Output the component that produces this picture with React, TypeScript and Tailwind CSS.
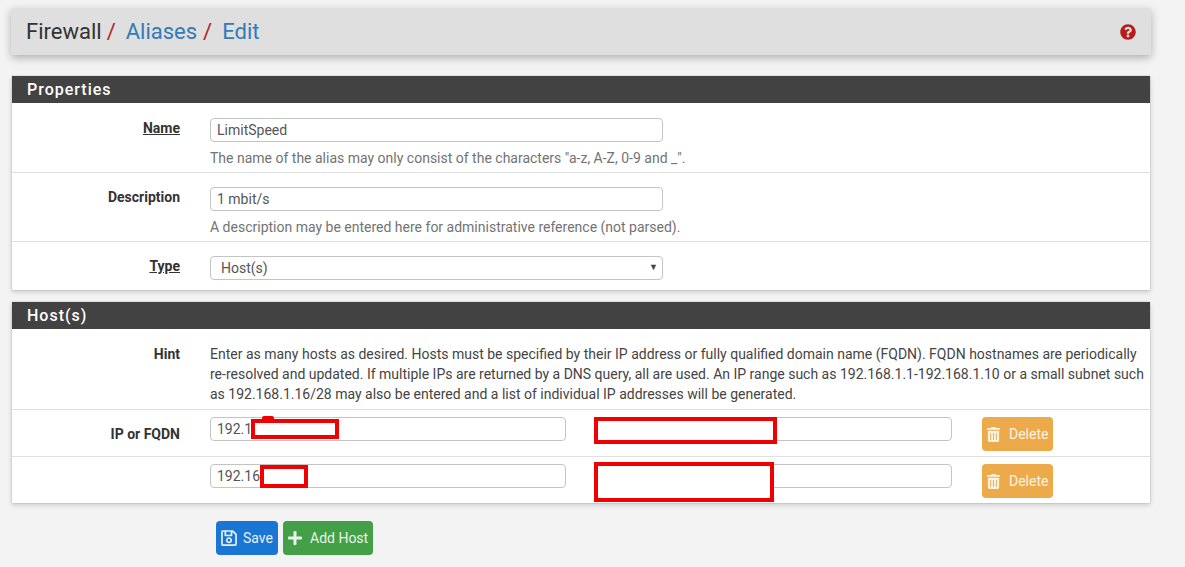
import { FaPlus, FaQuestionCircle, FaRegSave, FaTrashAlt } from 'react-icons/fa';

function PanelHead({ title }: { title: string }) {
  return (
    <div className="h-[27px] bg-[#424242] pl-[15px] text-[16px] leading-[28px] font-medium tracking-[1px] text-white">
      {title}
    </div>
  );
}

function Row({ label, underline, children, className }: { label?: string; underline?: boolean; children: React.ReactNode; className: string }) {
  return (
    <div className={`flex border-b border-[#e0e0e0] last:border-b-0 ${className}`}>
      <div className={`w-[168px] shrink-0 text-right text-[14px] leading-5 font-bold text-[#333] ${underline ? 'underline' : ''}`}>
        {label}
      </div>
      <div className="ml-[30px] min-w-0 flex-1">{children}</div>
    </div>
  );
}

function TextBox({ value, className }: { value?: string; className: string }) {
  return (
    <div className={`h-6 rounded-[4px] border border-[#c4c4c4] bg-white pl-[6px] text-[14px] leading-[22px] text-[#555] ${className}`}>
      {value}
    </div>
  );
}

function DeleteButton() {
  return (
    <div className="ml-[30px] flex h-[34px] w-[71px] items-center rounded-[4px] bg-[#edaa4a] pl-[4px] text-[14px] text-[#fdf3e3]">
      <FaTrashAlt className="h-[15px] w-[15px]" />
      <span className="ml-[8px]">Delete</span>
    </div>
  );
}

function Redact({ className }: { className: string }) {
  return <div className={`absolute border-4 border-[#f00000] bg-white ${className}`} />;
}

export default function App() {
  return (
    <div className="h-[567px] overflow-hidden bg-[#f3f3f3] pt-2 font-['Roboto',sans-serif]">
      <div className="mx-[11px] flex h-[47px] w-[1140px] items-center justify-between rounded-[2px] bg-[#dfdfdf] pr-[15px] pl-[15px] shadow-[0_3px_8px_rgba(0,0,0,0.28)]">
        <div className="text-[22px] leading-none text-[#333]">
          Firewall
          <span className="ml-[5px] text-[#b71c1c]">/</span>
          <span className="ml-[10px] text-[#337ab7]">Aliases</span>
          <span className="ml-[6px] text-[#b71c1c]">/</span>
          <span className="ml-[10px] text-[#337ab7]">Edit</span>
        </div>
        <FaQuestionCircle className="h-[16px] w-[16px] text-[#b71c1c]" />
      </div>

      <div className="mx-3 mt-[21px] w-[1138px] bg-white shadow-[0_2px_5px_rgba(0,0,0,0.18),0_0_1px_rgba(0,0,0,0.3)]">
        <PanelHead title="Properties" />
        <Row label="Name" underline className="h-[70px] pt-[15px]">
          <TextBox value="LimitSpeed" className="w-[453px]" />
          <p className="mt-[6px] text-[14px] leading-5 text-[#737373]">The name of the alias may only consist of the characters "a-z, A-Z, 0-9 and _".</p>
        </Row>
        <Row label="Description" className="h-[69px] pt-[14px]">
          <TextBox value="1 mbit/s" className="w-[453px]" />
          <p className="mt-[6px] text-[14px] leading-5 text-[#737373]">A description may be entered here for administrative reference (not parsed).</p>
        </Row>
        <Row label="Type" underline className="h-[48px] pt-[14px]">
          <div className="flex h-6 w-[453px] items-center justify-between rounded-[4px] border border-[#c4c4c4] bg-white pr-[4px] pl-[10px] text-[14px] text-[#555]">
            Host(s)
            <span className="text-[9px] text-[#444]">▼</span>
          </div>
        </Row>
      </div>

      <div className="mx-3 mt-3 w-[1138px] bg-white shadow-[0_2px_5px_rgba(0,0,0,0.18),0_0_1px_rgba(0,0,0,0.3)]">
        <PanelHead title="Host(s)" />
        <Row label="Hint" className="h-[81px] pt-[15px]">
          <p className="w-[936px] text-[14px] leading-[20px] text-[#444]">
            Enter as many hosts as desired. Hosts must be specified by their IP address or fully qualified domain name (FQDN). FQDN hostnames are periodically re-resolved and updated. If multiple IPs are returned by a DNS query, all are used. An IP range such as 192.168.1.1-192.168.1.10 or a small subnet such as 192.168.1.16/28 may also be entered and a list of individual IP addresses will be generated.
          </p>
        </Row>
        <Row label="IP or FQDN" className="h-[47px] pt-[14px]">
          <div className="relative -mt-[7px] flex items-start">
            <TextBox value="192.1" className="w-[356px]" />
            <TextBox className="ml-[28px] w-[358px]" />
            <DeleteButton />
            <div className="absolute top-[-1px] left-[52px] h-[3px] w-[12px] rounded-t-[2px] bg-[#f00000]" />
            <Redact className="top-[2px] left-[41px] h-[20px] w-[88px]" />
            <Redact className="top-0 left-[384px] h-[27px] w-[183px]" />
          </div>
        </Row>
        <Row className="h-[46px] pt-[7px]">
          <div className="relative flex items-start">
            <TextBox value="192.16" className="w-[356px]" />
            <TextBox className="ml-[28px] w-[358px]" />
            <DeleteButton />
            <Redact className="top-[1px] left-[50px] h-[23px] w-[48px]" />
            <Redact className="top-[-2px] left-[384px] h-[40px] w-[180px]" />
          </div>
        </Row>
      </div>

      <div className="mt-[18px] ml-[216px] flex gap-[5px] text-[14px]">
        <div className="flex h-[34px] w-[62px] items-center rounded-[4px] bg-[#1976d2] pl-[4px] text-[#e8f1fa]">
          <FaRegSave className="h-[18px] w-[18px]" />
          <span className="ml-[5px]">Save</span>
        </div>
        <div className="flex h-[34px] w-[90px] items-center rounded-[4px] bg-[#43a047] pl-[4px] text-[#e8f4e9]">
          <FaPlus className="h-[16px] w-[16px]" />
          <span className="ml-[7px]">Add Host</span>
        </div>
      </div>
    </div>
  );
}
